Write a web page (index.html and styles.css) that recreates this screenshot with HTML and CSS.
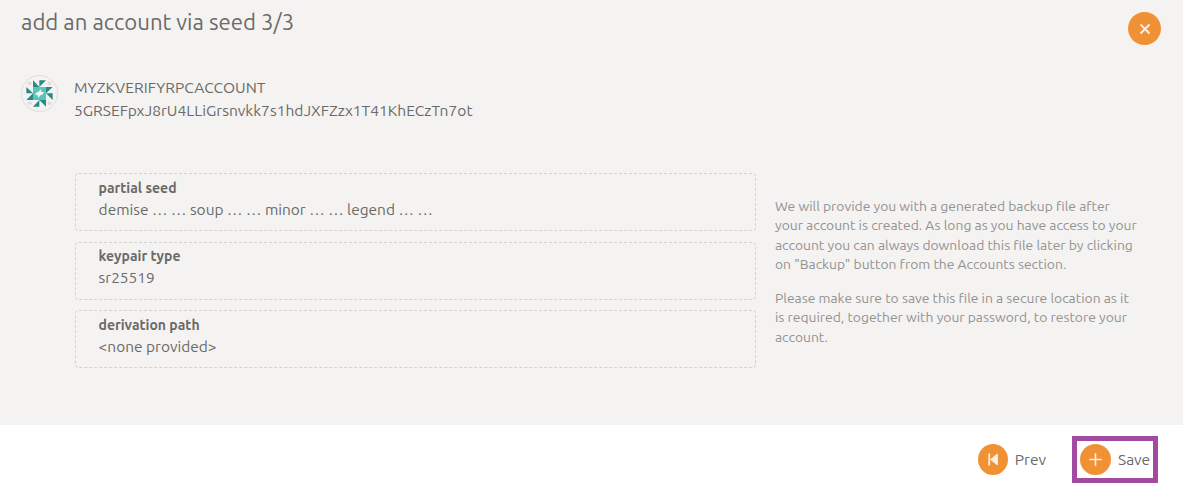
FILE: index.html
```html
<!DOCTYPE html>
<html lang="en">
<head>
<meta charset="utf-8">
<title>Add an account via seed</title>
<link rel="stylesheet" href="styles.css">
</head>
<body>
<main class="modal">
  <section class="content">
    <header class="header">
      <h1 class="title">add an account via seed 3/3</h1>
      <button class="round close" aria-label="Close"><svg width="33" height="33" viewBox="0 0 33 33"><path d="M13 13L21 21M21 13L13 21" stroke="#fdeee0" stroke-width="2" stroke-linecap="round"/></svg></button>
    </header>
    <div class="account">
      <svg class="identicon" width="37" height="37" viewBox="0 0 111 111">
        <circle cx="55.5" cy="55.5" r="54" fill="#f4f3f1" stroke="#dedddc" stroke-width="3"/>
        <g fill="#dedddc"><circle cx="26" cy="25" r="6"/><circle cx="85" cy="25" r="6"/><circle cx="26" cy="85" r="6"/><circle cx="85" cy="85" r="6"/></g>
        <path fill="#56c5bd" d="M36 36H75V75H36Z"/>
        <path fill="#278b83" d="M36 16V36H55ZM55 16H75L55 36ZM75 36H95L75 55ZM75 55H95V75ZM55 75H75V95ZM36 95H55V75ZM16 75H36V55ZM16 36V55H36Z"/>
        <path fill="#f4f3f1" d="M59 42L61 50L69 52L64 59L58 61L52 69L50 61L42 59L47 52L53 50Z"/>
      </svg>
      <div class="identity"><div class="name">MYZKVERIFYRPCACCOUNT</div><div class="address">5GRSEFpxJ8rU4LLiGrsnvkk7s1hdJXFZzx1T41KhECzTn7ot</div></div>
    </div>
    <div class="columns">
      <div class="fields">
        <div class="field"><div class="label">partial seed</div><div class="value">demise … … soup … … minor … … legend … …</div></div>
        <div class="field"><div class="label">keypair type</div><div class="value">sr25519</div></div>
        <div class="field"><div class="label">derivation path</div><div class="value">&lt;none provided&gt;</div></div>
      </div>
      <aside class="help">
        <p>We will provide you with a generated backup file after<br>your account is created. As long as you have access to your<br>account you can always download this file later by clicking<br>on "Backup" button from the Accounts section.</p>
        <p>Please make sure to save this file in a secure location as it<br>is required, together with your password, to restore your<br>account.</p>
      </aside>
    </div>
  </section>
  <footer class="actions">
    <button class="action prev"><svg class="round" width="30" height="31" viewBox="0 0 30 31"><path d="M11.2 10.2V20.8" stroke="#fdeee0" stroke-width="1.8" stroke-linecap="round"/><path d="M19.2 10.5V20.5L13 15.5Z" fill="#fdeee0" stroke="#fdeee0" stroke-width="1.4" stroke-linejoin="round"/></svg><span>Prev</span></button>
    <button class="action save"><svg class="round" width="31" height="31" viewBox="0 0 31 31"><path d="M15.5 9.8V21.2M9.8 15.5H21.2" stroke="#fdeee0" stroke-width="1.6" stroke-linecap="round"/></svg><span>Save</span></button>
  </footer>
</main>
</body>
</html>
```
FILE: styles.css
```css
* { box-sizing: border-box; }
body { margin: 0; background: #fff; color: #6b6a69; font-family: Ubuntu, "Noto Sans", sans-serif; font-size: 15px; }
h1, p { margin: 0; }
button { border: 0; padding: 0; background: none; color: inherit; font: inherit; }
.modal { width: 1183px; height: 493px; overflow: hidden; }
.content { height: 425px; background: #f4f3f1; }
.header { display: flex; justify-content: space-between; height: 75px; padding: 0 22px 0 21px; }
.title { margin-top: 6px; font-size: 22.15px; line-height: 32px; font-weight: 400; white-space: nowrap; }
.round { flex: none; border-radius: 50%; background: #f19135; }
.close { width: 33px; height: 33px; margin-top: 12px; }
.close svg { display: block; }
.account { display: flex; gap: 16px; height: 98px; padding-left: 21px; }
.identity { padding-top: 1px; font-size: 15.58px; line-height: 23px; white-space: nowrap; }
.columns { display: flex; gap: 19px; padding-left: 75px; }
.fields { display: flex; flex-direction: column; gap: 10.5px; width: 681px; }
.field { height: 58px; padding: 3px 22.6px; border: 1px dashed #d3d2d0; border-radius: 4px; white-space: nowrap; }
.field:nth-child(2) { padding-top: 2px; }
.label { font-size: 14px; line-height: 22px; font-weight: 700; }
.value { font-size: 15.46px; line-height: 22px; }
.help { padding-top: 23.8px; color: #939291; font-size: 13.86px; line-height: 19.5px; white-space: nowrap; }
.help p + p { margin-top: 14px; }
.actions { display: flex; gap: 25px; height: 68px; padding: 11px 25px 0 0; justify-content: flex-end; }
.action { display: flex; align-items: center; gap: 7px; height: 47px; font-size: 15.5px; }
.prev { margin-right: 1px; }
.save { width: 86px; padding-left: 3px; border: 5px solid #a24aa2; }
```
